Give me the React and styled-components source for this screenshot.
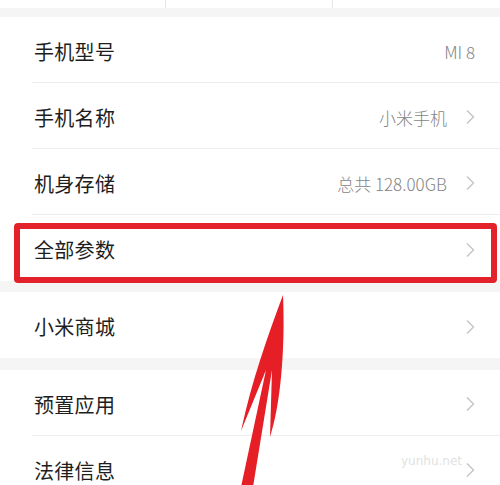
import React from "react";
import styled, { createGlobalStyle } from "styled-components";

const GlobalStyle = createGlobalStyle`
	html, body {
		margin: 0;
		padding: 0;
		background: #ffffff;
	}
	body {
		font-family: "Noto Sans CJK SC", "Noto Sans", sans-serif;
	}
`;

const Page = styled.div`
	position: relative;
	width: 500px;
	height: 485px;
	overflow: hidden;
	background: #ffffff;
`;

const TopBar = styled.div`
	display: grid;
	grid-template-columns: 166px 167px 1fr;
	height: 8px;
	background: #ffffff;
`;

const TopCell = styled.div`
	border-right: ${(p) => (p.last ? "none" : "1px solid #e6e6e6")};
`;

const Band = styled.div`
	height: ${(p) => p.h}px;
	background: #f5f5f5;
`;

const Section = styled.div`
	background: #ffffff;
`;

const Row = styled.div`
	height: 66px;
	padding-left: 32px;
	box-sizing: border-box;
	display: flex;
`;

const RowInner = styled.div`
	flex: 1;
	display: flex;
	align-items: center;
	padding: 3px 25px 0 2px;
	border-bottom: ${(p) => (p.divider ? "1px solid #ededed" : "none")};
`;

const Label = styled.span`
	flex: 1;
	font-size: 20px;
	color: #1e1e1e;
	letter-spacing: 0.3px;
`;

const Value = styled.span`
	font-size: 17px;
	font-weight: 300;
	color: #858585;
	margin-right: ${(p) => (p.arrow ? "19px" : "0")};
`;

const Chevron = () => (
	<svg width="9" height="16" viewBox="0 0 9 16">
		<polyline
			points="1,1.5 7.5,8 1,14.5"
			fill="none"
			stroke="#c4c4c4"
			strokeWidth="1.4"
			strokeLinejoin="round"
		/>
	</svg>
);

const Highlight = styled.div`
	position: absolute;
	left: 14px;
	top: 223px;
	width: 483px;
	height: 60px;
	box-sizing: border-box;
	border: 6px solid #e3212b;
	border-radius: 4px;
	pointer-events: none;
`;

const Watermark = styled.span`
	position: absolute;
	left: 401px;
	top: 454px;
	font-family: "DejaVu Sans", sans-serif;
	font-size: 12px;
	color: #e2e2e2;
`;

const Arrow = styled.svg`
	position: absolute;
	left: 0;
	top: 0;
	pointer-events: none;
`;

const SettingRow = ({ label, value, arrow = true, divider = true }) => (
	<Row>
		<RowInner divider={divider}>
			<Label>{label}</Label>
			{value && <Value arrow={arrow}>{value}</Value>}
			{arrow && <Chevron />}
		</RowInner>
	</Row>
);

export default function App() {
	return (
		<>
			<GlobalStyle />
			<Page>
				<TopBar>
					<TopCell />
					<TopCell />
					<TopCell last />
				</TopBar>
				<Band h={9} />
				<Section>
					<SettingRow label="手机型号" value="MI 8" arrow={false} />
					<SettingRow label="手机名称" value="小米手机" />
					<SettingRow label="机身存储" value="总共 128.00GB" />
					<SettingRow label="全部参数" divider={false} />
				</Section>
				<Band h={11} />
				<Section>
					<SettingRow label="小米商城" divider={false} />
				</Section>
				<Band h={12} />
				<Section>
					<SettingRow label="预置应用" />
					<SettingRow label="法律信息" />
				</Section>

				<Highlight />
				<Watermark>yunhu.net</Watermark>
				<Arrow width="500" height="485" viewBox="0 0 500 485">
					<path
						d="M283 295 C285 340 282 400 270 437 L272 370 L253 487 L241 487 L266 370 L241 431 C252 380 268 335 283 295 Z"
						fill="#e61e25"
					/>
				</Arrow>
			</Page>
		</>
	);
}
